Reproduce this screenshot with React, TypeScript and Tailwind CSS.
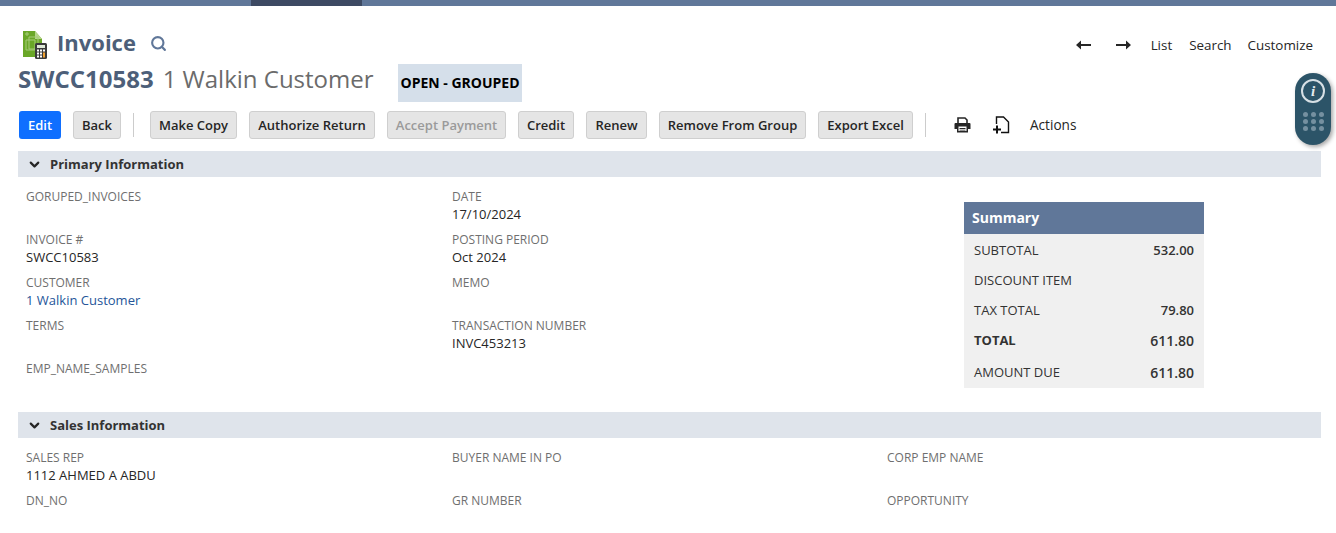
import React from 'react';
import { ChevronDown, Search } from 'lucide-react';

const font = "font-['Open_Sans',sans-serif]";

const buttons = [
  { label: 'Make Copy', width: 'w-[87px]' },
  { label: 'Authorize Return', width: 'w-[126px]' },
  { label: 'Accept Payment', width: 'w-[119px]', disabled: true },
  { label: 'Credit', width: 'w-[56px]' },
  { label: 'Renew', width: 'w-[61px]' },
  { label: 'Remove From Group', width: 'w-[147px]' },
  { label: 'Export Excel', width: 'w-[95px]' },
];

const Btn = ({ label, width, disabled }: { label: string; width: string; disabled?: boolean }) => (
  <button
    className={`h-[28px] ${width} rounded-[3px] border border-[#cfcfcf] bg-[#e5e5e5] pt-[2px] text-[13px] font-semibold ${disabled ? 'text-[#9a9a9a]' : 'text-[#262626]'}`}
  >
    {label}
  </button>
);

const Field = ({ label, value, link }: { label: string; value?: string; link?: boolean }) => (
  <div className="h-[43px] pt-[11px]">
    <div className="h-[17px] text-[12px] leading-[18px] text-[#6f6f6f]">{label}</div>
    {value && (
      <div className={`h-[18px] text-[13px] leading-[18px] ${link ? 'text-[#255599]' : 'text-[#262626]'}`}>{value}</div>
    )}
  </div>
);

const SectionHeader = ({ title }: { title: string }) => (
  <div className="flex h-[26px] items-center gap-[8px] bg-[#dfe4eb] pl-[9px] pt-[1px]">
    <ChevronDown size={15} strokeWidth={3.5} className="text-[#262626]" />
    <span className="text-[13px] font-bold text-[#333333]">{title}</span>
  </div>
);

const SummaryRow = ({ label, value, h, bold, big }: { label: string; value?: string; h: string; bold?: boolean; big?: boolean }) => (
  <div className={`flex ${h} items-center justify-between px-[10px] pt-[2px] text-[13px] text-[#333333]`}>
    <span className={bold ? 'font-bold' : ''}>{label}</span>
    {value && <span className={big ? 'mt-[-1px] text-[14px] font-semibold' : 'font-semibold'}>{value}</span>}
  </div>
);

const InvoiceIcon = () => (
  <svg width="26" height="29" viewBox="0 0 26 29">
    <path d="M1 1h12l7 8v18H1z" fill="#6aa728" />
    <path d="M13 1l7 8h-7z" fill="#b6d58b" />
    <path d="M4 3h2v2H4zM7 7h9v12H7zM4 10h9v10H4z" fill="none" stroke="#a6cc78" strokeWidth="1" />
    <rect x="13" y="13" width="12" height="16" rx="1.5" fill="#3a3a3a" />
    <rect x="15" y="15" width="8" height="3" fill="#dfe8d8" />
    <path d="M15 19.5h2v2h-2zM18 19.5h2v2h-2zM15 22.5h2v2h-2zM18 22.5h2v2h-2zM15 25.5h2v2h-2zM18 25.5h2v2h-2z" fill="#ffffff" />
    <path d="M21 19.5h2v2h-2z" fill="#ffffff" />
    <path d="M21 22.5h2v5h-2z" fill="#f0a030" />
  </svg>
);

const ArrowLeft = () => (
  <svg width="15" height="10" viewBox="0 0 15 10">
    <path d="M0 5l5-4.5V4h10v2H5v3.5z" fill="#262626" />
  </svg>
);

const ArrowRight = () => (
  <svg width="15" height="10" viewBox="0 0 15 10">
    <path d="M15 5l-5-4.5V4H0v2h10v3.5z" fill="#262626" />
  </svg>
);

const PrintIcon = () => (
  <svg width="17" height="16" viewBox="0 0 17 16">
    <path d="M4 6V1h7l2 2v3" fill="none" stroke="#262626" strokeWidth="1.6" />
    <path d="M1.5 6h14a1 1 0 0 1 1 1v5h-2.5v3.5H3V12H.5V7a1 1 0 0 1 1-1z" fill="#262626" />
    <path d="M4.5 9.5h8v4.5h-8z" fill="#ffffff" />
    <path d="M5.5 11h6v1h-6zM5.5 12.8h6v.8h-6z" fill="#262626" />
  </svg>
);

const AddDocIcon = () => (
  <svg width="17" height="18" viewBox="0 0 17 18">
    <path d="M3.5 8V1h7l5 5v10.5H8" fill="none" stroke="#111111" strokeWidth="1.4" />
    <path d="M0 13.5h8M4 9.5v8" stroke="#111111" strokeWidth="2" />
  </svg>
);

const FloatingWidget = () => (
  <div className="absolute left-[1295px] top-[73px] flex h-[72px] w-[36px] flex-col items-center rounded-full bg-[#2c5468] pt-[6px] shadow-[2px_2px_4px_rgba(0,0,0,0.35)]">
    <div className="flex h-[24px] w-[24px] items-center justify-center rounded-full border-2 border-[#d7e0e5] font-['Liberation_Serif',serif] text-[15px] font-bold italic leading-none text-[#e6ecef]">
      i
    </div>
    <div className="mt-[9px] grid grid-cols-3 gap-x-[3px] gap-y-[2px]">
      {Array.from({ length: 9 }).map((_, i) => (
        <div key={i} className="h-[5px] w-[5px] rounded-full bg-[#7590a0]" />
      ))}
    </div>
  </div>
);

export default function App() {
  return (
    <div className={`relative h-[533px] w-[1336px] overflow-hidden bg-white ${font}`}>
      {/* Top nav strip */}
      <div className="flex h-[6px] bg-[#607799]">
        <div className="ml-[251px] w-[111px] bg-[#3d4a63]" />
      </div>

      {/* Title row */}
      <div className="flex h-[57px] items-start justify-between pl-[22px] pr-[23px] pt-[24px]">
        <div className="flex items-start">
          <InvoiceIcon />
          <span className="ml-[9px] mt-[-2px] text-[22px] font-bold leading-[28px] text-[#4d5f79]">Invoice</span>
          <Search size={17} strokeWidth={3} className="ml-[14px] mt-[5px] text-[#607799]" />
        </div>
        <div className="flex items-center pt-[5px] text-[13.4px] text-[#262626]">
          <ArrowLeft />
          <span className="ml-[25px]"><ArrowRight /></span>
          <span className="ml-[20px]">List</span>
          <span className="ml-[17px]">Search</span>
          <span className="ml-[16px]">Customize</span>
        </div>
      </div>

      {/* Record title */}
      <div className="flex h-[48px] items-start pl-[18px]">
        <span className="text-[24px] font-bold leading-[32px] text-[#4d5f79]">SWCC10583</span>
        <span className="ml-[9px] text-[24px] leading-[32px] text-[#6b6b6b]">1 Walkin Customer</span>
        <div className="ml-[24px] mt-[1px] flex h-[38px] w-[124px] items-center justify-center bg-[#d5dfea] pb-[1px] pl-[1px] text-[14px] font-bold text-black">
          OPEN - GROUPED
        </div>
      </div>

      {/* Button bar */}
      <div className="flex h-[28px] items-center pl-[19px]">
        <button className="h-[28px] w-[42px] rounded-[3px] bg-[#0f6fff] pt-[2px] text-[13px] font-semibold text-white">Edit</button>
        <div className="ml-[12px]"><Btn label="Back" width="w-[48px]" /></div>
        <div className="ml-[12px] mr-[16px] h-[24px] w-px bg-[#cccccc]" />
        <div className="flex gap-[12px]">
          {buttons.map(b => (
            <Btn key={b.label} {...b} />
          ))}
        </div>
        <div className="ml-[12px] h-[24px] w-px bg-[#cccccc]" />
        <div className="ml-[28px] flex items-center"><PrintIcon /></div>
        <div className="ml-[22px] flex items-center"><AddDocIcon /></div>
        <span className="ml-[20px] text-[13.6px] text-[#262626]">Actions</span>
      </div>

      {/* Primary Information */}
      <div className="ml-[18px] mr-[15px] mt-[12px]">
        <SectionHeader title="Primary Information" />
        <div className="flex h-[235px]">
          <div className="w-[434px] pl-[8px]">
            <Field label="GORUPED_INVOICES" />
            <Field label="INVOICE #" value="SWCC10583" />
            <Field label="CUSTOMER" value="1 Walkin Customer" link />
            <Field label="TERMS" />
            <Field label="EMP_NAME_SAMPLES" />
          </div>
          <div className="w-[512px]">
            <Field label="DATE" value="17/10/2024" />
            <Field label="POSTING PERIOD" value="Oct 2024" />
            <Field label="MEMO" />
            <Field label="TRANSACTION NUMBER" value="INVC453213" />
          </div>
          <div className="mt-[25px] h-[186px] w-[240px] bg-[#f0f0f0]">
            <div className="flex h-[32px] items-center bg-[#607799] pb-[2px] pl-[8px] text-[14px] font-bold text-white">Summary</div>
            <SummaryRow label="SUBTOTAL" value="532.00" h="h-[31px]" />
            <SummaryRow label="DISCOUNT ITEM" h="h-[29px]" />
            <SummaryRow label="TAX TOTAL" value="79.80" h="h-[31px]" />
            <SummaryRow label="TOTAL" value="611.80" h="h-[30px]" bold big />
            <SummaryRow label="AMOUNT DUE" value="611.80" h="h-[33px]" big />
          </div>
        </div>
      </div>

      {/* Sales Information */}
      <div className="ml-[18px] mr-[15px]">
        <SectionHeader title="Sales Information" />
        <div className="flex">
          <div className="w-[434px] pl-[8px]">
            <Field label="SALES REP" value="1112 AHMED A ABDU" />
            <Field label="DN_NO" />
          </div>
          <div className="w-[435px]">
            <Field label="BUYER NAME IN PO" />
            <Field label="GR NUMBER" />
          </div>
          <div>
            <Field label="CORP EMP NAME" />
            <Field label="OPPORTUNITY" />
          </div>
        </div>
      </div>

      <FloatingWidget />
    </div>
  );
}
